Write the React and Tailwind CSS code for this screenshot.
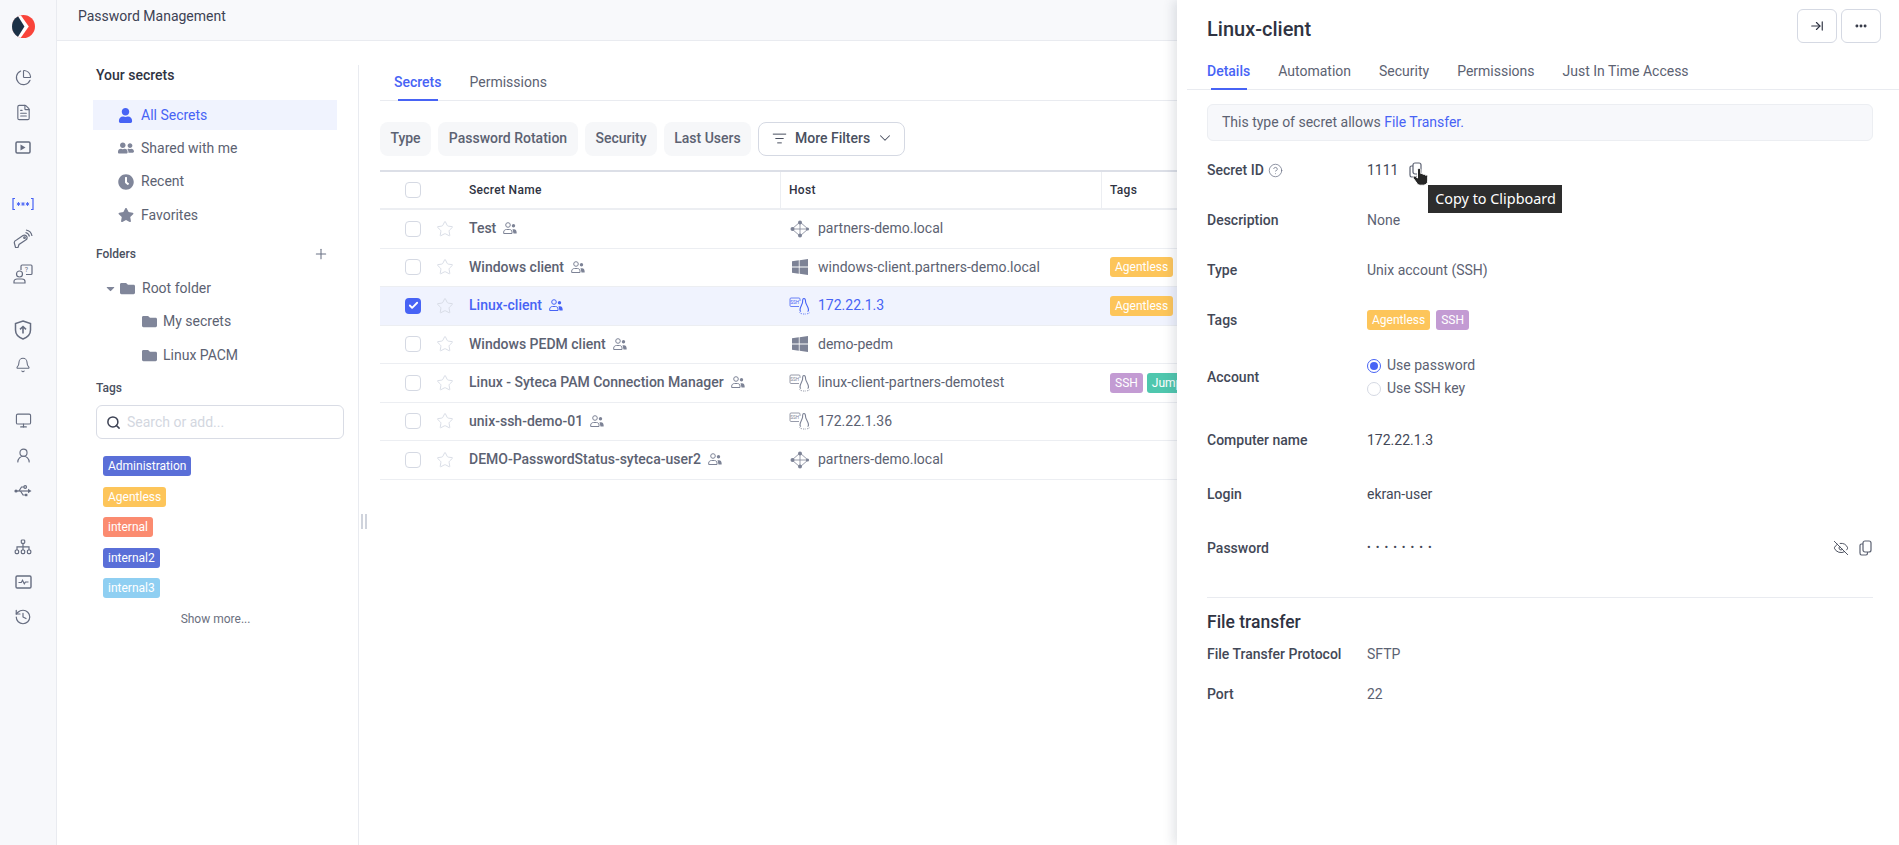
import React from 'react';
import { ChartPie, FileText, UserRound, Monitor, History, Bell, Plus, Search, Star, ChevronDown, ListFilter, ArrowRightToLine, Ellipsis, CircleHelp, EyeOff, Check } from 'lucide-react';
import { FaUser, FaUserFriends, FaClock, FaStar, FaFolder, FaCaretDown } from 'react-icons/fa';

const font = { fontFamily: 'Roboto, sans-serif' };
const railIcon = { size: 17, strokeWidth: 1.6, color: '#666d80' };

const Logo = () => (
    <svg width="23" height="23" viewBox="0 0 24 24" className="rounded-full">
        <rect width="24" height="24" fill="#f9443a" />
        <path d="M0 0H9L17.5 12L9 24H0Z" fill="#fff" />
        <path d="M0 0H5.5L13 12L5.5 24H0Z" fill="#1c3146" />
    </svg>
);

const PlayBox = () => (
    <svg width="16" height="13" viewBox="0 0 16 13" fill="none" stroke="#666d80" strokeWidth="1.5">
        <rect x="1" y="1" width="14" height="11" rx="1.2" />
        <path d="M5.5 3.5V9.5L10.5 6.5Z" fill="#666d80" stroke="none" />
    </svg>
);

const Stars = () => (
    <svg width="22" height="14" viewBox="0 0 22 14" fill="none" stroke="#4763f5" strokeWidth="1.2">
        <path d="M3 1.5H1V12.5H3M19 1.5H21V12.5H19" />
        <path d="M6.5 5V9M4.8 6L8.2 8M8.2 6L4.8 8M11 5V9M9.3 6L12.7 8M12.7 6L9.3 8M15.5 5V9M13.8 6L17.2 8M17.2 6L13.8 8" strokeWidth="0.9" />
    </svg>
);

const KeySignal = () => (
    <svg width="20" height="20" viewBox="0 0 20 20" fill="none" stroke="#666d80" strokeWidth="1.2">
        <path d="M1.5 14.5C1 13 2 11.5 3.5 11L10 6.5C11.5 5.7 13.5 6.5 14 8C14.4 9.5 13.5 10.7 12.3 11.2L6 15.5L5 18.5L2.5 18.5Z" />
        <circle cx="11.5" cy="8.7" r="0.8" />
        <path d="M12.5 3.5C14.5 4 16 5.5 16.5 7.5M13 1C16 1.5 18.5 4 19 7" />
    </svg>
);

const UserAsk = () => (
    <svg width="20" height="20" viewBox="0 0 20 20" fill="none" stroke="#666d80" strokeWidth="1.2">
        <circle cx="6.5" cy="10" r="3" />
        <path d="M1 19V17.5C1 15.8 2.5 15 4 15H9C10.5 15 12 15.8 12 17.5V19Z" />
        <path d="M8 6V2.2C8 1.5 8.5 1 9.2 1H18C18.6 1 19 1.5 19 2.2V9.5C19 10 18.6 10.5 18 10.5H13" />
        <text x="13.5" y="8" fontSize="7" fill="#666d80" stroke="none" textAnchor="middle" style={font}>?</text>
    </svg>
);

const ShieldUp = () => (
    <svg width="18" height="20" viewBox="0 0 18 20" fill="none" stroke="#666d80" strokeWidth="1.5">
        <path d="M9 1L16.5 3.5V10C16.5 14 13 17.5 9 19C5 17.5 1.5 14 1.5 10V3.5Z" />
        <path d="M9 13.5V6.5M6 9.3L9 6.5L12 9.3" strokeWidth="1.6" />
    </svg>
);

const UsbIcon = () => (
    <svg width="18" height="14" viewBox="0 0 18 14" fill="none" stroke="#666d80" strokeWidth="1.2">
        <circle cx="2" cy="7" r="1.6" fill="#666d80" stroke="none" />
        <path d="M2 7H15" />
        <path d="M14 4.8L17.5 7L14 9.2Z" fill="#666d80" stroke="none" />
        <path d="M5 7L7.5 3H10M6.5 7L9 11H11" />
        <circle cx="11.2" cy="3" r="1.3" />
        <rect x="11" y="9.8" width="2.4" height="2.4" fill="#666d80" stroke="none" />
    </svg>
);

const SiteMap = () => (
    <svg width="18" height="16" viewBox="0 0 18 16" fill="none" stroke="#666d80" strokeWidth="1.2">
        <rect x="7.3" y="1" width="3.4" height="3.4" rx="0.8" />
        <path d="M9 4.4V11M3 11V7.8H15V11" />
        <rect x="1.2" y="11" width="3.4" height="3.6" rx="1" />
        <rect x="7.3" y="11" width="3.4" height="3.6" rx="1" />
        <rect x="13.4" y="11" width="3.4" height="3.6" rx="1" />
    </svg>
);

const PulseBox = () => (
    <svg width="17" height="14" viewBox="0 0 17 14" fill="none" stroke="#666d80" strokeWidth="1.4">
        <rect x="1" y="1" width="15" height="12" rx="1.2" />
        <path d="M3.5 7.5H6.3L7.5 5.2L9.3 8.8L10.5 7H13.5" strokeWidth="1.1" />
    </svg>
);

const Rail = () => {
    const groups = [
        [<ChartPie {...railIcon} />, <FileText {...railIcon} />, <PlayBox />],
        [<Stars />, <KeySignal />, <UserAsk />],
        [<ShieldUp />, <Bell {...railIcon} size={16} />],
        [<Monitor {...railIcon} />, <UserRound {...railIcon} />, <UsbIcon />],
        [<SiteMap />, <PulseBox />, <History {...railIcon} size={18} />],
    ];
    return (
        <div className="w-[57px] shrink-0 h-full bg-[#f7f8fb] border-r border-[#e9ebf0] flex flex-col">
            <div className="h-[60px] w-[46px] flex justify-center pt-[15px]"><Logo /></div>
            {groups.map((group, i) => (
                <div key={i} className={i === 0 ? 'flex flex-col' : 'flex flex-col mt-[21px]'}>
                    {group.map((icon, j) => (
                        <div key={j} className="h-[35px] w-[46px] flex items-center justify-center">{icon}</div>
                    ))}
                </div>
            ))}
        </div>
    );
};

const Tag = ({ color, children }) => (
    <span className="inline-flex items-center h-[20px] px-[5px] rounded-[3px] text-[12px] text-white whitespace-nowrap" style={{ backgroundColor: color }}>{children}</span>
);

const Sidebar = () => {
    const nav = [
        { label: 'All Secrets', icon: <FaUser size={15} />, active: true },
        { label: 'Shared with me', icon: <FaUserFriends size={16} /> },
        { label: 'Recent', icon: <FaClock size={16} /> },
        { label: 'Favorites', icon: <FaStar size={16} /> },
    ];
    const tags = [
        ['Administration', '#5a6fd8'],
        ['Agentless', '#fdc55a'],
        ['internal', '#fb8b70'],
        ['internal2', '#5a6fd8'],
        ['internal3', '#8fcff2'],
    ];
    return (
        <div className="w-[302px] shrink-0 border-r border-[#e9ebf0] pl-[36px] flex flex-col text-[14px] text-[#5c6272]">
            <div className="h-[20px] pl-[3px] font-medium text-[#2f3342] flex items-center">Your secrets</div>
            <div className="mt-[15px] w-[244px] flex flex-col gap-[3.4px]">
                {nav.map(item => (
                    <div key={item.label} className={`h-[30px] flex items-center ${item.active ? 'bg-[#f0f3fe] text-[#4763f5]' : ''}`}>
                        <span className={`w-[48px] pl-[25px] flex justify-start ${item.active ? 'text-[#4763f5]' : 'text-[#80869a]'}`}>{item.icon}</span>
                        <span>{item.label}</span>
                    </div>
                ))}
            </div>
            <div className="mt-[14px] h-[20px] w-[290px] pl-[3px] flex items-center justify-between text-[12px] font-medium text-[#4a5060]">
                <span>Folders</span>
                <Plus size={16} strokeWidth={1.6} color="#6b7285" className="mr-[54px]" />
            </div>
            <div className="mt-[9px] flex flex-col gap-[3.5px]">
                <div className="h-[30px] flex items-center">
                    <FaCaretDown size={13} color="#80869a" className="ml-[11px]" />
                    <FaFolder size={15} color="#80869a" className="ml-[3px]" />
                    <span className="ml-[7px]">Root folder</span>
                </div>
                {['My secrets', 'Linux PACM'].map(name => (
                    <div key={name} className="h-[30px] flex items-center pl-[49px]">
                        <FaFolder size={15} color="#80869a" />
                        <span className="ml-[6px]">{name}</span>
                    </div>
                ))}
            </div>
            <div className="mt-[8px] h-[20px] pl-[3px] flex items-center text-[12px] font-medium text-[#4a5060]">Tags</div>
            <div className="mt-[7px] ml-[3px] w-[248px] h-[34px] border border-[#d9dce5] rounded-md flex items-center pl-[9px] gap-[6px]">
                <Search size={15} strokeWidth={2.4} color="#3d4254" />
                <input readOnly placeholder="Search or add..." className="outline-none text-[14px] w-[200px] placeholder:text-[#d3d7df]" style={font} />
            </div>
            <div className="mt-[17px] ml-[10px] flex flex-col items-start gap-[10.5px]">
                {tags.map(([name, color]) => <Tag key={name} color={color}>{name}</Tag>)}
            </div>
            <div className="mt-[11px] h-[20px] w-[242px] pl-[3px] flex items-center justify-center text-[12px] text-[#6b7080]">Show more...</div>
        </div>
    );
};

const DomainIcon = () => (
    <svg width="20" height="18" viewBox="0 0 20 18" fill="#7d8396" stroke="#7d8396">
        <path d="M10 2V16M2 9H18M10 2L2 9L10 16L18 9Z" fill="none" strokeWidth="0.8" />
        <circle cx="10" cy="2.5" r="2" stroke="none" />
        <circle cx="2.5" cy="9" r="2" stroke="none" />
        <circle cx="17.5" cy="9" r="1.6" stroke="none" />
        <circle cx="10" cy="15.5" r="2" stroke="none" />
    </svg>
);

const WinIcon = () => (
    <svg width="16" height="16" viewBox="0 0 16 16" fill="#7d8396">
        <path d="M0 2.2L6.8 1.3V7.5H0ZM7.6 1.2L16 0V7.5H7.6ZM0 8.4H6.8V14.7L0 13.8ZM7.6 8.4H16V16L7.6 14.8Z" />
    </svg>
);

const LinuxIcon = ({ color = '#7d8396' }) => (
    <svg width="22" height="18" viewBox="0 0 22 18" fill="none" stroke={color} strokeWidth="0.8">
        <path d="M10 9.5H2C1.4 9.5 1 9.1 1 8.5V2C1 1.4 1.4 1 2 1H10C10.6 1 11 1.4 11 2V4" />
        <text x="5.7" y="6.8" fontSize="4.6" fill={color} stroke="none" textAnchor="middle" style={font}>SSH</text>
        <path d="M15 1.5C13.5 1.5 13.6 3.5 13.6 5C13.6 7 11 9.5 11 13C11 14 11.5 14.2 12 14M15 1.5C16.5 1.5 16.6 3.5 16.6 5C16.6 7 19.5 9.5 19.5 13C19.5 14 19 14.2 18.5 14" strokeWidth="1.1" />
        <path d="M10.5 15.5C11.5 16 12 16.8 13 16.8M18 16.8C19 16.8 20 16 21 15.5M14 17H17" strokeDasharray="1 0.7" />
    </svg>
);

const SharedIcon = ({ color = '#7d8396' }) => (
    <svg width="14" height="13" viewBox="0 0 14 13" fill="none" stroke={color} strokeWidth="1">
        <circle cx="5" cy="3" r="2.3" />
        <path d="M.7 11.5V10C.7 8.5 2 7.5 3.5 7.5H6.5C8 7.5 9 8.5 9 10V11.5Z" />
        <circle cx="10.5" cy="3.8" r="1.7" fill={color} stroke="none" />
        <path d="M9.5 7.3H11C12.5 7.3 13.6 8.5 13.6 10L13.6 11.5H10.5" fill={color} stroke="none" />
    </svg>
);

const Box = ({ checked }) => (
    checked
        ? <span className="w-[16px] h-[16px] rounded-[4px] bg-[#4763f5] flex items-center justify-center"><Check size={11} strokeWidth={4} color="#fff" /></span>
        : <span className="w-[16px] h-[16px] rounded-[4px] border border-[#d5d9e3] bg-white" />
);

const rows = [
    { name: 'Test', host: 'partners-demo.local', icon: 'domain' },
    { name: 'Windows client', host: 'windows-client.partners-demo.local', icon: 'win', tags: [['Agentless', '#fdc55a'], ['RDP', '#8fcff2']] },
    { name: 'Linux-client', host: '172.22.1.3', icon: 'linux', selected: true, tags: [['Agentless', '#fdc55a'], ['SSH', '#c39bd3']] },
    { name: 'Windows PEDM client', host: 'demo-pedm', icon: 'win' },
    { name: 'Linux - Syteca PAM Connection Manager', host: 'linux-client-partners-demotest', icon: 'linux', tags: [['SSH', '#c39bd3'], ['Jump', '#4fc7ae']] },
    { name: 'unix-ssh-demo-01', host: '172.22.1.36', icon: 'linux' },
    { name: 'DEMO-PasswordStatus-syteca-user2', host: 'partners-demo.local', icon: 'domain' },
];

const Secrets = () => (
    <div className="flex-1 min-w-0 pl-[21px] text-[14px] text-[#5c6272]">
        <div className="h-[36px] border-b border-[#e9ebf0] flex items-start pt-[7px] relative">
            <span className="ml-[14px] font-medium text-[#4763f5]">Secrets</span>
            <span className="ml-[28px]">Permissions</span>
            <span className="absolute left-[18px] bottom-[-1px] w-[40px] h-[2px] bg-[#4763f5]" />
        </div>
        <div className="mt-[21px] flex gap-[7px] font-medium">
            {[['Type', 'w-[51px]'], ['Password Rotation', 'w-[140px]'], ['Security', 'w-[72px]'], ['Last Users', 'w-[87px]']].map(([label, w]) => (
                <div key={label} className={`${w} h-[34px] pb-[2px] rounded-lg bg-[#f6f7f9] flex items-center justify-center`}>{label}</div>
            ))}
            <div className="w-[147px] h-[34px] pb-[2px] rounded-lg border border-[#d5d9e3] flex items-center pl-[13px] gap-[8px] text-[#4a5060]">
                <ListFilter size={15} strokeWidth={1.6} />
                <span>More Filters</span>
                <ChevronDown size={18} strokeWidth={1.4} className="ml-[-2px]" />
            </div>
        </div>
        <div className="mt-[14px] w-[860px] border-t-2 border-[#dcdfe7]">
            <div className="flex h-[38px] border-b-2 border-[#eceef2] text-[12px] font-medium text-[#2f3342] tracking-[0.3px]">
                <div className="w-[401px] flex items-center pl-[25px] border-r border-[#eceef2]">
                    <Box />
                    <span className="ml-[48px]">Secret Name</span>
                </div>
                <div className="w-[321px] flex items-center pl-[8px] border-r border-[#eceef2]">Host</div>
                <div className="flex items-center pl-[8px]">Tags</div>
            </div>
            {rows.map(row => (
                <div key={row.name} className={`flex h-[38.5px] border-b border-[#eceef2] ${row.selected ? 'bg-[#f0f3fe] text-[#4763f5]' : ''}`}>
                    <div className="w-[400px] flex items-center pl-[25px] shrink-0">
                        <Box checked={row.selected} />
                        <Star size={18} strokeWidth={1.2} color="#d5d9e3" className="ml-[15px]" />
                        <span className="ml-[15px] font-medium">{row.name}</span>
                        <span className="ml-[7px]"><SharedIcon color={row.selected ? '#4763f5' : '#7d8396'} /></span>
                    </div>
                    <div className="w-[321px] flex items-center shrink-0">
                        <span className="w-[38px] flex justify-center pl-[2px]">
                            {row.icon === 'domain' && <DomainIcon />}
                            {row.icon === 'win' && <WinIcon />}
                            {row.icon === 'linux' && <LinuxIcon color={row.selected ? '#4763f5' : '#7d8396'} />}
                        </span>
                        <span>{row.host}</span>
                    </div>
                    <div className="flex items-center pl-[9px] gap-[4px]">
                        {row.tags && row.tags.map(([name, color]) => <Tag key={name} color={color}>{name}</Tag>)}
                    </div>
                </div>
            ))}
        </div>
    </div>
);

const CopyIcon = () => (
    <svg width="15" height="16" viewBox="0 0 15 16" fill="none" stroke="#5c6272" strokeWidth="1.2">
        <rect x="5" y="1" width="8" height="11" rx="2" />
        <path d="M5 4H3.5C2.5 4 2 4.5 2 5.5V13C2 14 2.5 15 3.5 15H8C9 15 9.5 14 9.5 13V12" />
    </svg>
);

const Hand = () => (
    <svg width="18" height="20" viewBox="0 0 18 20" fill="#262626" stroke="#fff" strokeWidth="1">
        <path d="M7 1.5c-.8 0-1.5.7-1.5 1.5v8L3.8 9.5c-.7-.6-1.7-.5-2.2.1-.5.6-.5 1.4 0 2l3.5 4.9c.8 1.1 2 1.7 3.4 1.7h3c2.3 0 4.2-1.9 4.2-4.2V9.5c0-.8-.7-1.4-1.5-1.4-.3 0-.6.1-.8.2-.1-.7-.7-1.2-1.5-1.2-.3 0-.6.1-.9.3-.2-.6-.7-1-1.4-1-.3 0-.5.1-.8.2V3c0-.8-.7-1.5-1.5-1.5z" />
    </svg>
);

const Row = ({ label, className = 'mt-[30px]', children }) => (
    <div className={`flex items-center h-[20px] ${className}`}>
        <div className="w-[160px] shrink-0 font-medium text-[#434857]">{label}</div>
        <div className="flex-1 flex items-center">{children}</div>
    </div>
);

const Panel = () => (
    <div className="absolute top-0 right-0 bottom-0 w-[722px] bg-white shadow-[-4px_0_10px_rgba(60,70,90,0.14)] text-[14px] text-[#5c6272]">
        <div className="pl-[30px] pr-[18px] pt-[9px] h-[52px] flex items-start justify-between">
            <h1 className="text-[20px] font-medium text-[#2f3342] h-[40px] flex items-center">Linux-client</h1>
            <div className="flex gap-[4px]">
                <button className="w-[40px] h-[34px] rounded-md border border-[#d5d9e3] flex items-center justify-center"><ArrowRightToLine size={14} color="#2f3342" /></button>
                <button className="w-[40px] h-[34px] rounded-md border border-[#d5d9e3] flex items-center justify-center"><Ellipsis size={14} strokeWidth={3} color="#2f3342" /></button>
            </div>
        </div>
        <div className="h-[38px] ml-[10px] border-b border-[#e9ebf0] flex items-start pt-[9px] pl-[20px] gap-[28px] relative">
            <span className="font-medium text-[#4763f5]">Details</span>
            <span>Automation</span>
            <span>Security</span>
            <span>Permissions</span>
            <span>Just In Time Access</span>
            <span className="absolute left-[24px] bottom-[-1px] w-[36px] h-[2px] bg-[#4763f5]" />
        </div>
        <div className="pl-[30px] pr-[26px]">
            <div className="mt-[14px] h-[37px] rounded-md border border-[#eceef2] bg-[#f7f8fb] flex items-center pl-[14px]">
                <span>This type of secret allows <span className="text-[#4763f5]">File Transfer.</span></span>
            </div>
            <div className="mt-[19px] flex items-center h-[20px]">
                <div className="w-[160px] shrink-0 font-medium text-[#434857] flex items-center gap-[4px]">Secret ID <CircleHelp size={15} strokeWidth={1.2} color="#6b7285" /></div>
                <span className="text-[#434857]">1111</span>
                <span className="ml-[10px] relative">
                    <CopyIcon />
                    <span className="absolute left-[4px] top-[5px]"><Hand /></span>
                    <span className="absolute left-[20px] top-[23px] w-[134px] h-[28px] bg-[#2d2d2d] text-white flex items-center justify-center whitespace-nowrap text-[14.4px]" style={{ fontFamily: '"Noto Sans", sans-serif' }}>Copy to Clipboard</span>
                </span>
            </div>
            <Row label="Description">None</Row>
            <Row label="Type">Unix account (SSH)</Row>
            <Row label="Tags">
                <div className="flex gap-[6px]">
                    <Tag color="#fdc55a">Agentless</Tag>
                    <Tag color="#c39bd3">SSH</Tag>
                </div>
            </Row>
            <div className="mt-[24px] flex items-center h-[46px]">
                <div className="w-[160px] shrink-0 font-medium text-[#434857]">Account</div>
                <div className="flex flex-col">
                    <div className="h-[23px] flex items-center gap-[6px]">
                        <span className="w-[14px] h-[14px] rounded-full border border-[#4763f5] p-[2px]"><span className="block w-full h-full rounded-full bg-[#4763f5]" /></span>
                        Use password
                    </div>
                    <div className="h-[23px] flex items-center gap-[6px]">
                        <span className="w-[14px] h-[14px] rounded-full border border-[#d5d9e3]" />
                        Use SSH key
                    </div>
                </div>
            </div>
            <Row label="Computer name"><span className="text-[#434857]">172.22.1.3</span></Row>
            <Row label="Login" className="mt-[34px]"><span className="text-[#434857]">ekran-user</span></Row>
            <Row label="Password" className="mt-[34px]">
                <span className="text-[#434857] tracking-[5px] text-[11px]">••••••••</span>
                <span className="ml-auto flex items-center gap-[9px]">
                    <EyeOff size={16} strokeWidth={1.4} color="#434857" />
                    <CopyIcon />
                </span>
            </Row>
            <div className="mt-[39px] border-t border-[#e9ebf0]" />
            <div className="mt-[12px] h-[24px] flex items-center text-[17.5px] font-medium text-[#2f3342]">File transfer</div>
            <Row label="File Transfer Protocol" className="mt-[10px]">SFTP</Row>
            <Row label="Port" className="mt-[20px]">22</Row>
        </div>
    </div>
);

export default function App() {
    return (
        <div className="relative flex w-full h-[845px] overflow-hidden bg-white" style={font}>
            <Rail />
            <div className="flex-1 min-w-0 flex flex-col">
                <div className="h-[41px] shrink-0 bg-[#f8f9fb] border-b border-[#e9ebf0] flex items-start pt-[6px] pl-[21px] text-[14px] text-[#3d4254]">Password Management</div>
                <div className="flex-1 min-h-0 flex pt-[24px]">
                    <Sidebar />
                    <Secrets />
                </div>
            </div>
            <div className="absolute left-[361px] top-[514px] w-[6px] h-[15px] border-x-2 border-[#cfd3dc]" />
            <Panel />
        </div>
    );
}
